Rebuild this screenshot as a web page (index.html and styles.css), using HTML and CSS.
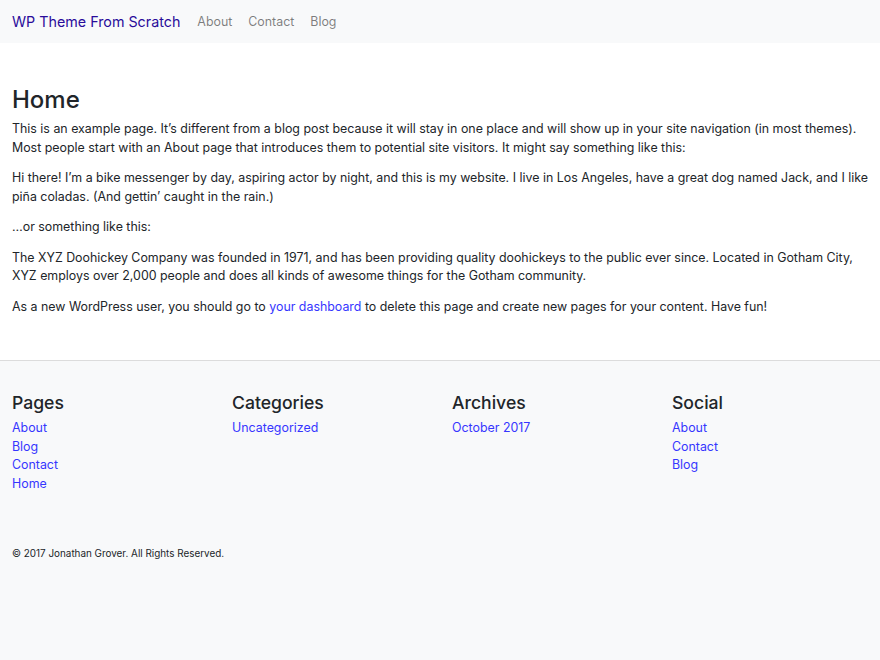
FILE: index.html
```html
<!DOCTYPE html>
<html lang="en">
<head>
<meta charset="utf-8">
<title>WP Theme From Scratch</title>
<link rel="stylesheet" href="styles.css">
</head>
<body>
<nav class="navbar">
  <a class="brand" href="#">WP Theme From Scratch</a>
  <ul class="nav">
    <li><a href="#">About</a></li>
    <li><a href="#">Contact</a></li>
    <li><a href="#">Blog</a></li>
  </ul>
</nav>
<main class="content">
  <h1 class="page-title">Home</h1>
  <p>This is an example page. It’s different from a blog post because it will stay in one place and will show up in your site navigation (in most themes). Most people start with an About page that introduces them to potential site visitors. It might say something like this:</p>
  <p>Hi there! I’m a bike messenger by day, aspiring actor by night, and this is my website. I live in Los Angeles, have a great dog named Jack, and I like piña coladas. (And gettin’ caught in the rain.)</p>
  <p>…or something like this:</p>
  <p>The XYZ Doohickey Company was founded in 1971, and has been providing quality doohickeys to the public ever since. Located in Gotham City, XYZ employs over 2,000 people and does all kinds of awesome things for the Gotham community.</p>
  <p>As a new WordPress user, you should go to <a href="#">your dashboard</a> to delete this page and create new pages for your content. Have fun!</p>
</main>
<footer class="footer">
  <div class="widgets">
    <section class="widget">
      <h2>Pages</h2>
      <ul>
        <li><a href="#">About</a></li>
        <li><a href="#">Blog</a></li>
        <li><a href="#">Contact</a></li>
        <li><a href="#">Home</a></li>
      </ul>
    </section>
    <section class="widget">
      <h2>Categories</h2>
      <ul>
        <li><a href="#">Uncategorized</a></li>
      </ul>
    </section>
    <section class="widget">
      <h2>Archives</h2>
      <ul>
        <li><a href="#">October 2017</a></li>
      </ul>
    </section>
    <section class="widget">
      <h2>Social</h2>
      <ul>
        <li><a href="#">About</a></li>
        <li><a href="#">Contact</a></li>
        <li><a href="#">Blog</a></li>
      </ul>
    </section>
  </div>
  <p class="copyright">© 2017 Jonathan Grover. All Rights Reserved.</p>
</footer>
</body>
</html>
```
FILE: styles.css
```css
html, body {
  margin: 0;
  padding: 0;
  height: 100%;
}
body {
  font-family: Inter, "Liberation Sans", sans-serif;
  font-size: 12.4px;
  line-height: 18.5px;
  color: #212529;
  background: #f8f9fa;
  display: flex;
  flex-direction: column;
}
a {
  color: #3636ff;
  text-decoration: none;
}
.navbar {
  display: flex;
  align-items: center;
  height: 43px;
  padding: 1px 12px 0;
  box-sizing: border-box;
  background: #f8f9fa;
}
.brand {
  font-size: 14.3px;
  color: #2a0c9a;
  margin-right: 17px;
}
.nav {
  display: flex;
  list-style: none;
  margin: 0;
  padding: 0;
  gap: 16px;
}
.nav a {
  color: rgba(0, 0, 0, 0.5);
  font-size: 12.4px;
}
.content {
  background: #fff;
  padding: 42px 12px 32px;
  border-bottom: 1px solid #dcdcdc;
}
.page-title {
  font-size: 24px;
  font-weight: 500;
  line-height: 30px;
  margin: 0 0 5px;
}
.content p {
  margin: 0 0 12px;
}
.footer {
  flex: 1;
  padding: 30px 12px 20px;
  background: #f8f9fa;
}
.widgets {
  display: grid;
  grid-template-columns: repeat(4, 1fr);
  margin: 0 -12px;
}
.widget {
  padding: 0 12px;
}
.widget h2 {
  font-size: 17.6px;
  font-weight: 500;
  line-height: 23px;
  margin: 0 0 5px;
}
.widget ul {
  list-style: none;
  margin: 0;
  padding: 0;
}
.copyright {
  font-size: 9.9px;
  margin: 51px 0 0;
}
```
